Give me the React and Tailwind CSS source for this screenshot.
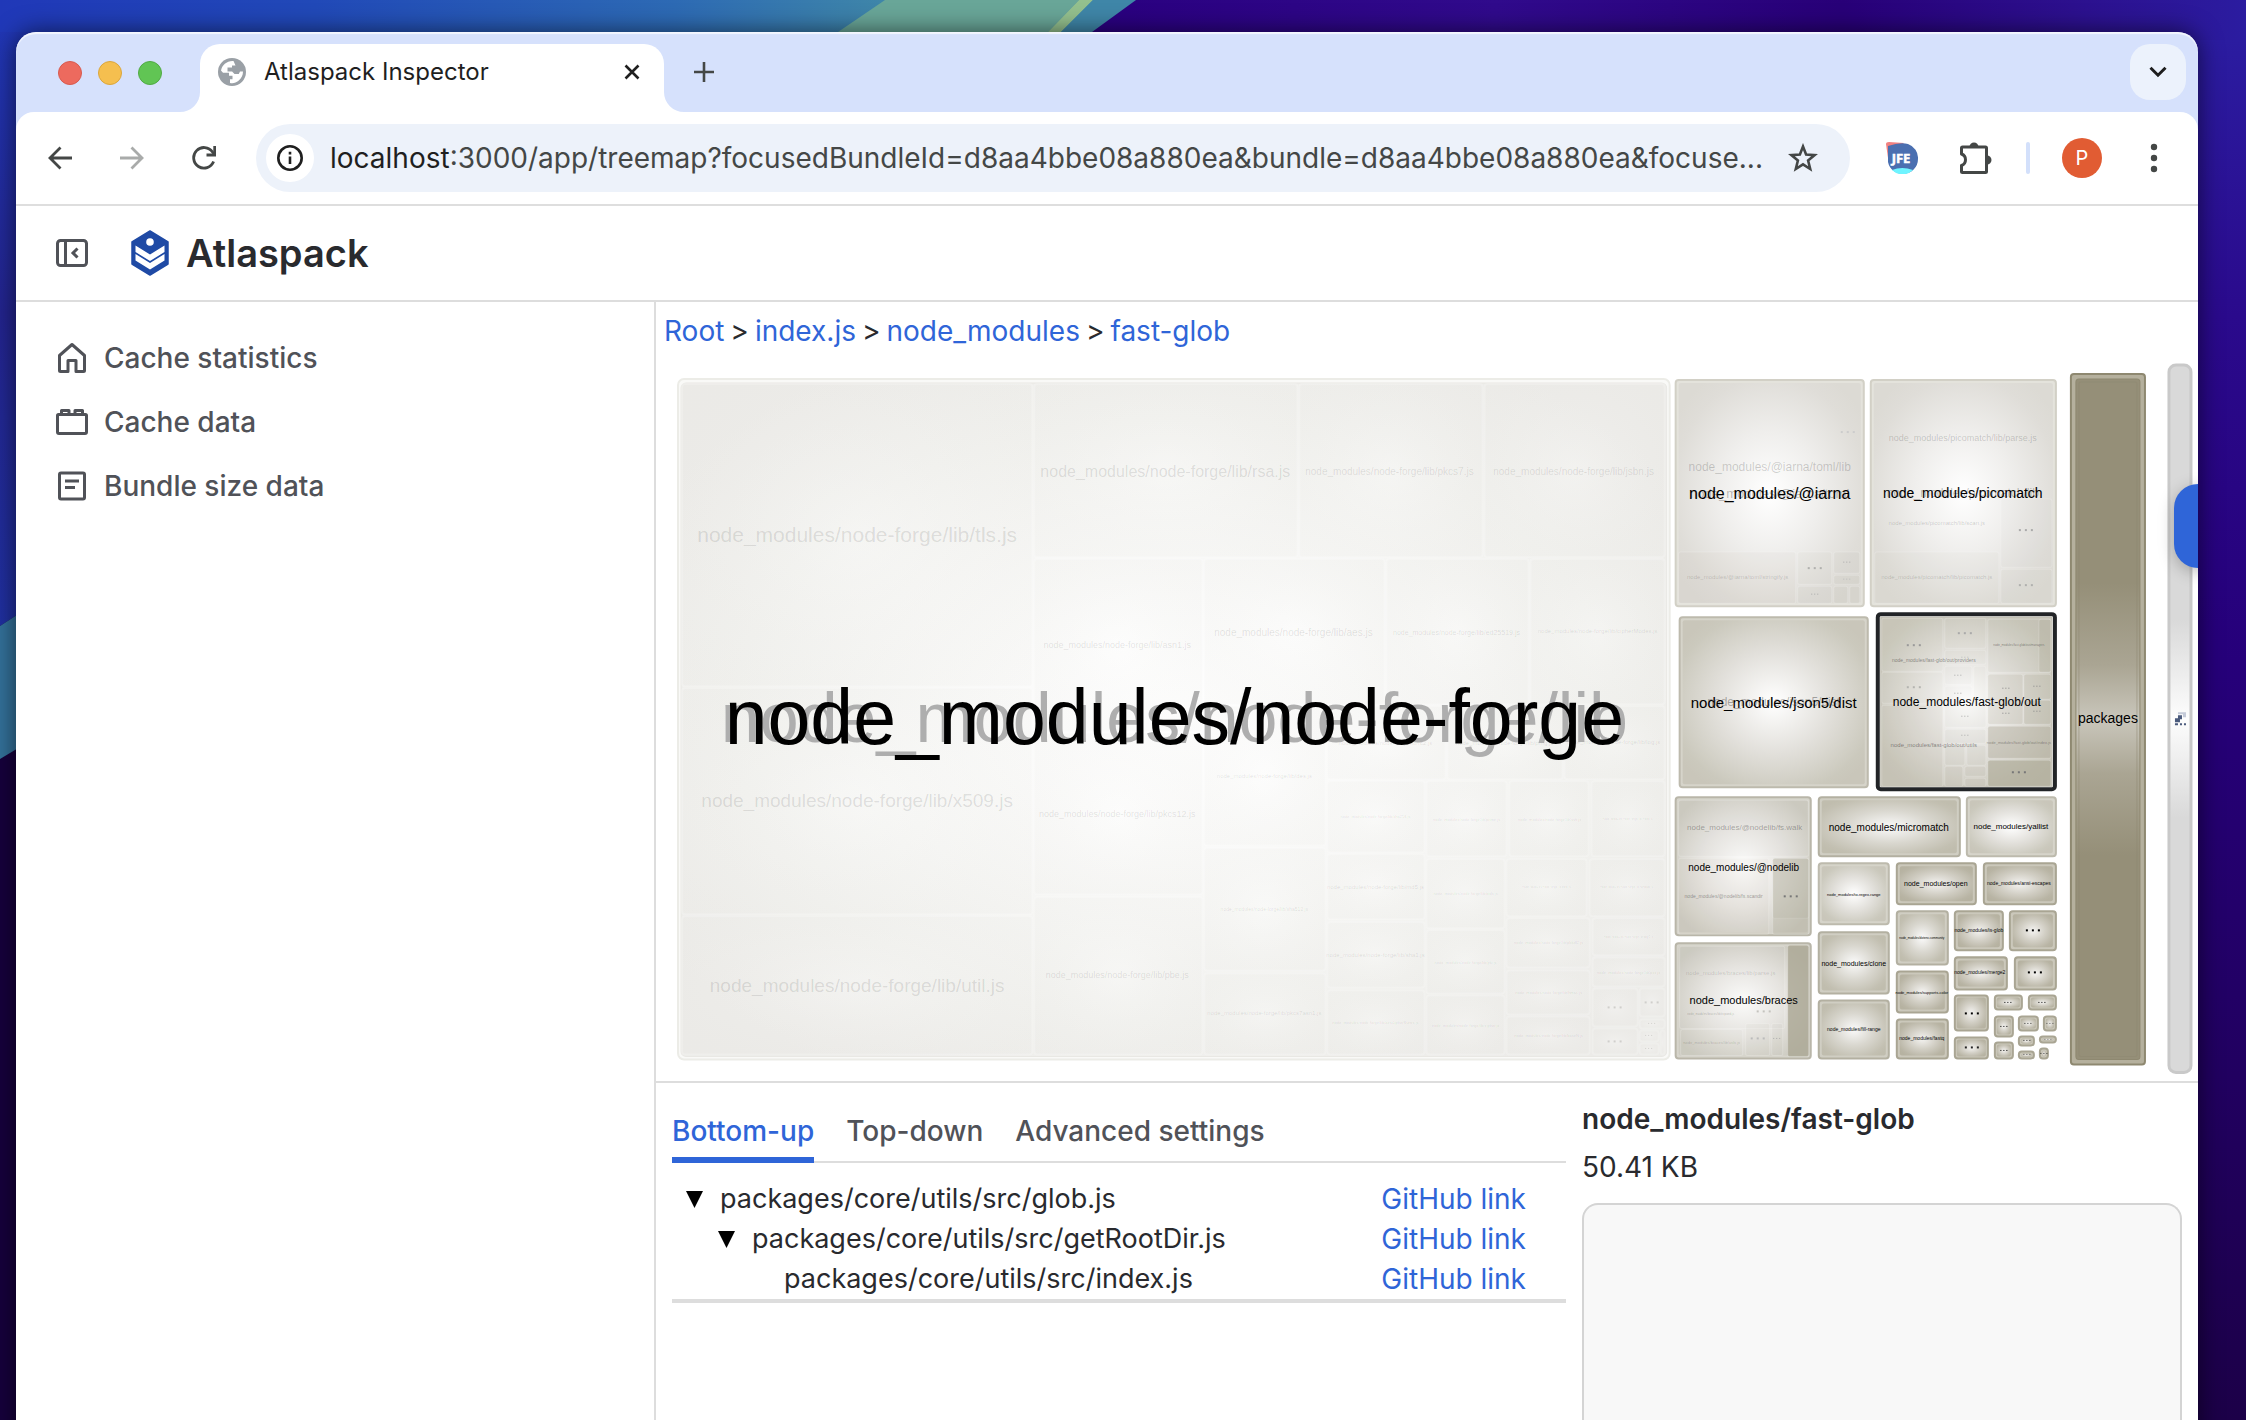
import React from 'react';

const SANS = "font-['Inter','Liberation_Sans',sans-serif]";

/* ---------- treemap data: [x, y, width, height] on the chart canvas ---------- */

const forgeCells = [
  [682, 385, 350, 302], [682, 689, 350, 226], [682, 917, 350, 138],
  [1034, 385, 263, 173], [1299, 385, 183, 173], [1484, 385, 180, 173],
  [1034, 560, 168, 172], [1034, 734, 168, 161], [1034, 898, 168, 157],
  [1204, 560, 180, 145], [1386, 560, 142, 145], [1530, 560, 134, 145],
  [1204, 707, 121, 139], [1204, 849, 121, 122], [1204, 974, 121, 81],
  [1327, 707, 118, 73], [1447, 707, 115, 73], [1564, 707, 100, 73],
  [1327, 782, 97, 71], [1327, 855, 97, 65], [1327, 923, 97, 65], [1327, 991, 97, 64],
  [1426, 782, 80, 75], [1509, 782, 79, 75], [1591, 782, 73, 75],
  [1426, 860, 78, 69], [1426, 931, 78, 63], [1426, 996, 78, 59],
  [1506, 860, 80, 57], [1589, 860, 75, 57],
  [1506, 919, 83, 49], [1506, 971, 83, 44], [1506, 1017, 83, 38],
  [1592, 919, 72, 37], [1592, 958, 72, 29],
  [1592, 989, 45, 38], [1592, 1029, 45, 26],
  [1639, 989, 25, 28], [1639, 1020, 25, 9], [1639, 1031, 19, 11], [1639, 1044, 19, 11], [1660, 1031, 4, 24],
];

const forgeLabels = [
  [857, 535, 21, 'node_modules/node-forge/lib/tls.js'],
  [857, 801, 19, 'node_modules/node-forge/lib/x509.js'],
  [857, 986, 19, 'node_modules/node-forge/lib/util.js'],
  [1165, 472, 16, 'node_modules/node-forge/lib/rsa.js'],
  [1389, 472, 10, 'node_modules/node-forge/lib/pkcs7.js'],
  [1573, 472, 10, 'node_modules/node-forge/lib/jsbn.js'],
  [1117, 646, 9, 'node_modules/node-forge/lib/asn1.js'],
  [1117, 815, 9, 'node_modules/node-forge/lib/pkcs12.js'],
  [1117, 976, 9, 'node_modules/node-forge/lib/pbe.js'],
  [1293, 633, 10, 'node_modules/node-forge/lib/aes.js'],
  [1456, 633, 7, 'node_modules/node-forge/lib/ed25519.js'],
  [1597, 632, 6, 'node_modules/node-forge/lib/cipherModes.js'],
  [1264, 777, 6, 'node_modules/node-forge/lib/des.js'],
  [1264, 910, 5, 'node_modules/node-forge/lib/sha512.js'],
  [1264, 1014, 6, 'node_modules/node-forge/lib/pkcs7asn1.js'],
  [1385, 744, 6, 'node_modules/node-forge/lib/rc2.js'],
  [1504, 744, 6, 'node_modules/node-forge/lib/prng.js'],
  [1613, 743, 6, 'node_modules/node-forge/lib/log.js'],
  [1375, 817, 4, 'node_modules/node-forge/lib/sha256.js'],
  [1375, 888, 6, 'node_modules/node-forge/lib/md5.js'],
  [1375, 956, 6, 'node_modules/node-forge/lib/sha1.js'],
  [1375, 1023, 4, 'node_modules/node-forge/lib/aesCipherSuites.js'],
  [1466, 820, 4, 'node_modules/node-forge/lib/prime.js'],
  [1549, 820, 4, 'node_modules/node-forge/lib/ssh.js'],
  [1627, 820, 3, 'node_modules/node-forge/lib/index.js'],
  [1465, 894, 4, 'node_modules/node-forge/lib/oids.js'],
  [1465, 963, 4, 'node_modules/node-forge/lib/pki.js'],
  [1465, 1026, 4, 'node_modules/node-forge/lib/cipher.js'],
  [1546, 888, 3, 'node_modules/node-forge/lib/pem.js'],
  [1626, 888, 3, 'node_modules/node-forge/lib/random.js'],
  [1548, 943, 4, 'node_modules/node-forge/lib/pbkdf2.js'],
  [1548, 993, 4, 'node_modules/node-forge/lib/hmac.js'],
  [1548, 1036, 4, 'node_modules/node-forge/lib/baseN.js'],
  [1628, 938, 3, 'node_modules/node-forge/lib/mgf1.js'],
  [1628, 973, 4, 'node_modules/node-forge/lib/pss.js'],
];

const forgeDots = [
  [1614, 1008, 2], [1614, 1042, 2], [1651, 1003, 2], [1651, 1024, 1], [1648, 1036, 1], [1648, 1049, 1],
];

/* top-level packages: [x, y, width, height, tone] */
const packageCells = [
  [1674, 380, 190, 228, 'pale'], [1869, 380, 187, 228, 'pale'],
  [1678, 617, 190, 172, 'mid'],
  [1674, 797, 137, 140, 'soft'], [1674, 943, 137, 117, 'soft'],
  [1817, 797, 143, 61, 'deep'], [1965, 797, 91, 61, 'mid'],
  [1817, 863, 72, 63, 'mid'], [1817, 932, 72, 63, 'deep'], [1817, 1000, 72, 60, 'deep'],
  [1895, 863, 81, 43, 'dark'], [1982, 863, 74, 43, 'dark'],
  [1895, 911, 53, 55, 'deep'], [1895, 971, 53, 43, 'dark'], [1895, 1019, 53, 41, 'dark'],
  [1953, 911, 50, 41, 'dark'], [2008, 911, 48, 41, 'dark'],
  [1953, 957, 54, 34, 'dark'], [2013, 957, 43, 34, 'dark'],
  [1953, 995, 35, 37, 'dark'], [1953, 1037, 35, 23, 'dark'],
  [1993, 995, 29, 16, 'dark'], [2027, 995, 29, 16, 'dark'],
  [1993, 1016, 20, 22, 'dark'], [1993, 1042, 20, 18, 'dark'],
  [2017, 1016, 21, 16, 'dark'], [2042, 1016, 14, 16, 'dark'],
  [2017, 1036, 17, 11, 'dark'], [2038, 1036, 18, 8, 'dark'],
  [2017, 1051, 17, 9, 'dark'], [2038, 1048, 10, 12, 'dark'],
];

/* nested files: [x, y, width, height, opacity of the shade] */
const nestedCells = [
  [1678, 553, 117, 51, 0.05], [1797, 553, 34, 32, 0.06], [1797, 587, 34, 17, 0.08],
  [1833, 553, 26, 21, 0.08], [1833, 576, 26, 9, 0.1], [1833, 587, 14, 17, 0.1], [1849, 587, 10, 17, 0.1],
  [1874, 553, 124, 51, 0.04], [2000, 500, 51, 68, 0.03], [2000, 570, 51, 34, 0.06],
  [1881, 619, 61, 53, 0.04], [1881, 673, 61, 31, 0.04], [1944, 619, 41, 30, 0.04], [1944, 651, 41, 14, 0.04],
  [1944, 667, 27, 18, 0.03], [1973, 667, 12, 37, 0.04], [1944, 687, 27, 17, 0.03],
  [1881, 706, 61, 81, 0.12], [1944, 706, 41, 22, 0.06], [1944, 730, 41, 14, 0.08],
  [1944, 746, 20, 20, 0.1], [1966, 746, 19, 20, 0.1], [1944, 767, 18, 20, 0.14], [1964, 767, 21, 10, 0.14], [1964, 779, 21, 8, 0.14],
  [1987, 620, 63, 53, 0.1], [2038, 620, 12, 53, 0.25],
  [1987, 675, 35, 50, 0.2], [2023, 675, 27, 25, 0.25], [2023, 701, 27, 24, 0.3],
  [1987, 727, 63, 32, 0.4], [1987, 761, 63, 26, 0.6],
  [1678, 801, 130, 56, 0.03], [1678, 859, 90, 76, 0.05], [1772, 859, 36, 60, 0.15], [1772, 859, 36, 76, 0.3],
  [1679, 947, 105, 82, 0.02], [1680, 1030, 62, 26, 0.04], [1745, 1024, 24, 32, 0.06], [1771, 1024, 11, 32, 0.06],
  [1787, 946, 21, 111, 0.8],
];

/* [x, y, size, colour, text] */
const packageLabels = [
  [1769, 494, 13, '#00000044', 'node_modules/@iarna/toml'],
  [1769, 468, 12, '#00000030', 'node_modules/@iarna/toml/lib'],
  [1737, 578, 6, '#00000030', 'node_modules/@iarna/toml/stringify.js'],
  [1769, 494, 16, '#000000', 'node_modules/@iarna'],
  [1962, 494, 12, '#00000044', 'node_modules/picomatch/lib'],
  [1962, 439, 9, '#00000030', 'node_modules/picomatch/lib/parse.js'],
  [1936, 524, 6, '#00000030', 'node_modules/picomatch/lib/scan.js'],
  [1936, 578, 6, '#00000030', 'node_modules/picomatch/lib/picomatch.js'],
  [1962, 494, 14, '#000000', 'node_modules/picomatch'],
  [1773, 703, 12, '#00000050', 'node_modules/json5/dist'],
  [1773, 703, 15, '#000000', 'node_modules/json5/dist'],
  [1933, 661, 5, '#00000070', 'node_modules/fast-glob/out/providers'],
  [1933, 746, 6, '#00000070', 'node_modules/fast-glob/out/utils'],
  [2018, 646, 3, '#00000070', 'node_modules/fast-glob/out/managers'],
  [2018, 743, 4, '#00000060', 'node_modules/fast-glob/out/index.js'],
  [1966, 703, 12, '#000000', 'node_modules/fast-glob/out'],
  [1744, 828, 8, '#00000050', 'node_modules/@nodelib/fs.walk'],
  [1723, 897, 5, '#00000060', 'node_modules/@nodelib/fs.scandir'],
  [1743, 868, 10, '#000000', 'node_modules/@nodelib'],
  [1730, 974, 6, '#00000028', 'node_modules/braces/lib/parse.js'],
  [1710, 1015, 3, '#00000040', 'node_modules/braces/lib/expand.js'],
  [1711, 1043, 4, '#00000034', 'node_modules/braces/lib/utils.js'],
  [1743, 1001, 11, '#000000', 'node_modules/braces'],
  [1888, 828, 10, '#000000', 'node_modules/micromatch'],
  [2010, 827, 8, '#000000', 'node_modules/yallist'],
  [1853, 895, 4, '#000000', 'node_modules/to-regex-range'],
  [1853, 964, 7, '#000000', 'node_modules/clone'],
  [1853, 1030, 5, '#000000', 'node_modules/fill-range'],
  [1935, 884, 7, '#000000', 'node_modules/open'],
  [2018, 884, 5, '#000000', 'node_modules/ansi-escapes'],
  [1921, 939, 3, '#000000', 'node_modules/dotenv-community'],
  [1921, 993, 4, '#000000', 'node_modules/supports-color'],
  [1921, 1039, 5, '#000000', 'node_modules/fastq'],
  [1978, 931, 5, '#000000', 'node_modules/is-glob'],
  [1979, 973, 5, '#000000', 'node_modules/merge2'],
];

/* [x, y, size, colour] */
const packageDots = [
  [2032, 931, 2, '#000'], [2034, 973, 2, '#000'], [1971, 1014, 2, '#000'], [1971, 1048, 2, '#222'],
  [2007, 1003, 1, '#000'], [2041, 1003, 1, '#000'], [2003, 1027, 1, '#000'], [2003, 1051, 1, '#000'],
  [2027, 1024, 1, '#333'], [2049, 1024, 1, '#555'], [2026, 1041, 1, '#333'], [2047, 1040, 1, '#777'],
  [2026, 1055, 1, '#555'], [2043, 1054, 1, '#333'],
  [1790, 897, 2, '#777'], [1763, 1012, 2, '#c4c3be'], [1757, 1039, 2, '#bbb'], [1776, 1039, 1, '#aaa'],
  [1847, 433, 2, '#ccc'], [1814, 569, 2, '#b0b0ae'], [1814, 595, 1, '#aaa'], [1846, 563, 1, '#aaa'], [1846, 580, 1, '#bbb'],
  [2025, 531, 2, '#aaa'], [2025, 586, 2, '#b0b0ae'],
  [1913, 646, 2, '#999'], [1913, 688, 2, '#b4b4b0'], [1964, 634, 2, '#aaa'], [1964, 658, 1, '#bbb'],
  [1957, 676, 1, '#aaa'], [1957, 694, 1, '#aaa'], [1964, 717, 1, '#aaa'], [1964, 736, 1, '#aaa'],
  [2005, 689, 1, '#888'], [2036, 687, 1, '#888'], [2005, 714, 1, '#888'], [2036, 712, 1, '#888'], [2018, 773, 2, '#777'],
];

const tones = {
  pale: { fill: 'url(#tone-pale)', border: '#d2d0c6', rim: '#e4e3dc' },
  soft: { fill: 'url(#tone-soft)', border: '#b9b6a9', rim: '#d6d4cb' },
  mid: { fill: 'url(#tone-mid)', border: '#bdbaad', rim: '#d6d4ca' },
  deep: { fill: 'url(#tone-deep)', border: '#b3b0a1', rim: '#d0cec3' },
  dark: { fill: 'url(#tone-dark)', border: '#a9a593', rim: '#cbc8bb' },
};

function Label({ x, y, size, fill, children }) {
  return (
    <text x={x} y={y} fontSize={size} fill={fill} textAnchor="middle" dominantBaseline="central">
      {children}
    </text>
  );
}

function Dots({ x, y, size, fill }) {
  const gap = size === 1 ? 3 : size * 3;
  return (
    <g fill={fill}>
      {[-gap, 0, gap].map((dx) => (
        <rect key={dx} x={x + dx - size / 2} y={y - size / 2} width={size + 0} height={size} />
      ))}
    </g>
  );
}

function Gradient({ id, stops }) {
  return (
    <radialGradient id={id} cx="0.5" cy="0.5" r="0.62">
      {stops.map(([offset, color, opacity = 1]) => (
        <stop key={offset} offset={offset} stopColor={color} stopOpacity={opacity} />
      ))}
    </radialGradient>
  );
}

function Treemap() {
  return (
    <svg
      viewBox="656 361 1541 721"
      className="block w-full font-['Liberation_Sans',Arial,sans-serif]"
      role="img"
      aria-label="Bundle size treemap"
    >
      <defs>
        <Gradient id="forge" stops={[[0, '#ffffff'], [0.3, '#fafaf9'], [0.72, '#f1f1ee'], [1, '#ecebe8']]} />
        <Gradient id="glow" stops={[[0, '#ffffff', 0.25], [1, '#e4e3de', 0.12]]} />
        <Gradient id="tone-pale" stops={[[0, '#ffffff'], [0.45, '#efeeec'], [0.85, '#dfddd8'], [1, '#dcdad4']]} />
        <Gradient id="tone-soft" stops={[[0, '#fdfdfc'], [0.5, '#e8e6e2'], [1, '#cdcbc1']]} />
        <Gradient id="tone-mid" stops={[[0, '#ffffff'], [0.5, '#e2e0db'], [0.9, '#cbc9bd'], [1, '#c9c6ba']]} />
        <Gradient id="tone-deep" stops={[[0, '#fafafa'], [0.5, '#d9d7cf'], [0.9, '#c3c0b2'], [1, '#c0bdae']]} />
        <Gradient id="tone-dark" stops={[[0, '#f4f3f1'], [0.5, '#d2cfc5'], [0.9, '#b9b5a5'], [1, '#b6b2a1']]} />
        <linearGradient id="packages" x1="0" y1="0" x2="0" y2="1">
          <stop offset="0" stopColor="#958f78" />
          <stop offset="0.3" stopColor="#958f78" />
          <stop offset="0.42" stopColor="#aaa593" />
          <stop offset="0.5" stopColor="#c9c6bb" />
          <stop offset="0.58" stopColor="#aaa593" />
          <stop offset="0.7" stopColor="#958f78" />
          <stop offset="1" stopColor="#958f78" />
        </linearGradient>
        <linearGradient id="brand" x1="0" y1="0" x2="0" y2="1">
          <stop offset="0.36" stopColor="#d9d9d9" />
          <stop offset="0.5" stopColor="#fdfdfd" />
          <stop offset="0.64" stopColor="#d9d9d9" />
        </linearGradient>
      </defs>

      <rect x="678" y="380" width="991" height="680" rx="6" fill="#f9f9f7" stroke="#ecece7" strokeWidth="2" />
      <rect x="681" y="384" width="985" height="673" rx="5" fill="url(#forge)" stroke="#e9e8e4" />
      {forgeCells.map(([x, y, w, h]) => (
        <rect key={`${x}-${y}`} x={x} y={y} width={w} height={h} rx="3" fill="url(#glow)" stroke="#ffffff" strokeOpacity="0.2" strokeWidth="2" />
      ))}
      {forgeLabels.map(([x, y, size, text]) => (
        <Label key={text} x={x} y={y} size={size} fill="#0000001c">{text}</Label>
      ))}
      {forgeDots.map(([x, y, size]) => (
        <Dots key={`${x}-${y}`} x={x} y={y} size={size} fill="#d0cfcc" />
      ))}
      <Label x={1174} y={719} size={70} fill="#aeaeae">node_modules/node-forge/lib</Label>
      <Label x={1174} y={718} size={77} fill="#000000">node_modules/node-forge</Label>

      {packageCells.map(([x, y, w, h, tone]) => {
        const t = tones[tone];
        const inset = w < 40 ? 3 : 4;
        return (
          <g key={`${x}-${y}`}>
            <rect x={x + 1} y={y + 1} width={w - 2} height={h - 2} rx="3" fill={t.rim} stroke={t.border} strokeWidth="2" />
            <rect x={x + inset} y={y + inset} width={w - inset * 2} height={h - inset * 2} rx="2" fill={t.fill} />
          </g>
        );
      })}
      <rect x="1877" y="615" width="177" height="175" rx="3" fill="#ffffff" stroke="#222427" strokeWidth="4" />
      <rect x="1880" y="618" width="171" height="169" fill="url(#tone-mid)" stroke="#bdbaad" />
      {nestedCells.map(([x, y, w, h, shade]) => (
        <rect key={`${x}-${y}-${h}`} x={x} y={y} width={w} height={h} rx="2" fill="#aaa693" fillOpacity={shade} stroke="#ffffff" strokeOpacity="0.2" />
      ))}
      {packageLabels.map(([x, y, size, fill, text]) => (
        <Label key={`${text}-${size}`} x={x} y={y} size={size} fill={fill}>{text}</Label>
      ))}
      {packageDots.map(([x, y, size, fill]) => (
        <Dots key={`${x}-${y}`} x={x} y={y} size={size} fill={fill} />
      ))}

      <rect x="2070" y="375" width="74" height="690" rx="3" fill="#b5b09d" stroke="#8e8870" strokeWidth="2" />
      <rect x="2075" y="380" width="64" height="680" rx="3" fill="url(#packages)" stroke="#8e8870" />
      <rect x="2078" y="383" width="58" height="674" rx="2" fill="none" stroke="#8e8870" strokeOpacity="0.5" />
      <Label x={2107} y={719} size={14} fill="#000000">packages</Label>

      <rect x="2168" y="366" width="22" height="707" rx="7" fill="url(#brand)" stroke="#c9c9c9" strokeWidth="3" />
      <g fill="#4a5a7c">
        <path d="M2174 719h3v-3h4v4h-2v3h-5z" />
        <path d="M2177 713h8v5h-3v-3h-5z" fill="#c4cad8" />
        <path d="M2174 724h3v2h-3zM2179 724h2v2h-2zM2183 724h2v2h-2z" />
      </g>
    </svg>
  );
}

/* ---------- desktop ---------- */

function Wallpaper() {
  return (
    <svg className="absolute inset-0 h-full w-full" viewBox="0 0 2246 1420" preserveAspectRatio="none" aria-hidden="true">
      <defs>
        <linearGradient id="sky" gradientUnits="userSpaceOnUse" x1="0" y1="0" x2="900" y2="0">
          <stop offset="0" stopColor="#2038b8" />
          <stop offset="0.35" stopColor="#2149b8" />
          <stop offset="0.75" stopColor="#2d6ab4" />
          <stop offset="1" stopColor="#4088a8" />
        </linearGradient>
        <linearGradient id="left" x1="0" y1="0" x2="0" y2="1">
          <stop offset="0" stopColor="#2038b8" />
          <stop offset="0.5" stopColor="#23248e" />
          <stop offset="1" stopColor="#2030a0" />
        </linearGradient>
        <linearGradient id="violet" x1="0" y1="0" x2="1" y2="0">
          <stop offset="0" stopColor="#2a0080" />
          <stop offset="0.35" stopColor="#300a8c" />
          <stop offset="0.65" stopColor="#280078" />
          <stop offset="0.85" stopColor="#2c108e" />
          <stop offset="1" stopColor="#2b1ca0" />
        </linearGradient>
        <linearGradient id="right" x1="0" y1="0" x2="0" y2="1">
          <stop offset="0" stopColor="#2b1ca0" />
          <stop offset="0.2" stopColor="#2a0a8c" />
          <stop offset="0.45" stopColor="#26007a" />
          <stop offset="0.75" stopColor="#210060" />
          <stop offset="1" stopColor="#1c0048" />
        </linearGradient>
      </defs>
      <rect width="2246" height="1420" fill="#16003c" />
      <path d="M0 0H40V600L0 626Z" fill="url(#left)" />
      <path d="M0 0H1140V32H0Z" fill="url(#sky)" />
      <path d="M0 626L40 600V735L0 759Z" fill="#33719a" />
      <path d="M885 0H1079L1048 32H838Z" fill="#69a698" />
      <path d="M1079 0H1093L1061 32H1048Z" fill="#94c08e" />
      <path d="M1093 0H1136L1092 32H1061Z" fill="#3f86a8" />
      <path d="M1136 0H2246V200H1092V32Z" fill="url(#violet)" />
      <path d="M2190 40H2246V1420H2190Z" fill="url(#right)" />
    </svg>
  );
}

/* ---------- browser chrome ---------- */

function TabStrip() {
  return (
    <div className="flex h-20 items-end pl-[42px] pr-3">
      <div className="flex h-full items-center gap-4 pr-[18px] pt-[2px]">
        <button aria-label="Close window" className="size-6 rounded-full border border-[#d85a4f] bg-[#ed6a5e]" />
        <button aria-label="Minimise window" className="size-6 rounded-full border border-[#dba63c] bg-[#f5bf4f]" />
        <button aria-label="Zoom window" className="size-6 rounded-full border border-[#51aa44] bg-[#61c554]" />
      </div>
      <svg className="size-5 text-white" viewBox="0 0 20 20" aria-hidden="true"><path d="M20 0v20H0A20 20 0 0 0 20 0Z" fill="currentColor" /></svg>
      <div className="flex h-[68px] w-[464px] items-center rounded-t-[20px] bg-white pb-3 pl-[18px] pr-5">
        <svg className="size-7 shrink-0" viewBox="0 0 28 28" aria-hidden="true">
          <circle cx="14" cy="14" r="14" fill="#9aa0a6" />
          <path d="M15.500 3C9 2.500 4 7 3 12.500l2 2.200h6v3h3.500v3.500H12V25c3.500.8 6-.3 8.500-2.200 3-2.600 4.500-5.500 4.500-9.300h-3l-1.200 2.400h-4.300l-2.400-2.500H9.500v-3.800h4.500V7.500h3.500Z" fill="#fff" />
        </svg>
        <span className="ml-[18px] grow truncate text-2xl text-[#1f1f1f]">Atlaspack Inspector</span>
        <button aria-label="Close tab" className="p-1 text-[#1f1f1f]">
          <svg className="size-4" viewBox="0 0 16 16"><path d="M1.500 1.500l13 13M14.500 1.500l-13 13" stroke="currentColor" strokeWidth="2.600" /></svg>
        </button>
      </div>
      <svg className="size-5 text-white" viewBox="0 0 20 20" aria-hidden="true"><path d="M0 0v20h20A20 20 0 0 1 0 0Z" fill="currentColor" /></svg>
      <button aria-label="New tab" className="mb-[30px] ml-[10px] text-[#444746]">
        <svg className="size-5" viewBox="0 0 20 20"><path d="M10 0v20M0 10h20" stroke="currentColor" strokeWidth="2.600" /></svg>
      </button>
      <button aria-label="Search tabs" className="mb-3 ml-auto flex size-14 items-center justify-center rounded-[20px] bg-[#ecf2fc] text-[#1f1f1f]">
        <svg className="h-3 w-[18px]" viewBox="0 0 18 12"><path d="M1.500 1.800L9 9.200l7.500-7.400" fill="none" stroke="currentColor" strokeWidth="3" /></svg>
      </button>
    </div>
  );
}

function Toolbar() {
  return (
    <div className="flex h-[94px] items-center rounded-t-[18px] border-b-2 border-[#dedede] bg-white pl-8 pr-10 text-[#444746]">
      <button aria-label="Back">
        <svg className="size-6" viewBox="0 0 24 24" fill="none" stroke="currentColor" strokeWidth="2.800"><path d="M24 12H2M12.500 1.500L2 12l10.500 10.500" /></svg>
      </button>
      <button aria-label="Forward" className="ml-12 text-[#a9abaa]" disabled>
        <svg className="size-6" viewBox="0 0 24 24" fill="none" stroke="currentColor" strokeWidth="2.800"><path d="M0 12h22M11.500 1.500L22 12 11.500 22.500" /></svg>
      </button>
      <button aria-label="Reload" className="ml-12">
        <svg className="size-6" viewBox="0 0 24 24" fill="none" stroke="currentColor" strokeWidth="2.800">
          <path d="M21.600 15.500A10.300 10.300 0 1 1 20.500 6L22.500 8.500" />
          <path d="M14.500 9h8.200V0" />
        </svg>
      </button>
      <div className="ml-10 flex h-[68px] min-w-0 grow items-center rounded-full bg-[#edf2fa] pl-[10px] pr-8">
        <button aria-label="Site information" className="flex size-12 shrink-0 items-center justify-center rounded-full bg-white text-[#1f1f1f]">
          <svg className="size-[26px]" viewBox="0 0 26 26" fill="none" stroke="currentColor" strokeWidth="2.600">
            <circle cx="13" cy="13" r="11.700" /><path d="M13 11.500V19M13 6.800v2.700" />
          </svg>
        </button>
        <div className="ml-4 flex min-w-0 grow items-center text-[28px] leading-9">
          <label htmlFor="address" className="text-[#1f1f1f]">localhost</label>
          <input
            id="address"
            className="min-w-0 grow truncate bg-transparent outline-none"
            defaultValue=":3000/app/treemap?focusedBundleId=d8aa4bbe08a880ea&bundle=d8aa4bbe08a880ea&focuse..."
          />
        </div>
        <button aria-label="Bookmark" className="ml-4">
          <svg className="size-[30px]" viewBox="0 0 30 30" fill="none" stroke="currentColor" strokeWidth="2.600">
            <path d="M15 3.500l3.100 8 8.600.6-6.600 5.500 2.100 8.400L15 21.400 7.800 26l2.100-8.400-6.600-5.500 8.600-.6Z" />
          </svg>
        </button>
      </div>
      <button aria-label="JFE extension" className="ml-9 shrink-0">
        <svg className="size-8" viewBox="0 0 32 32">
          <path d="M0 2Q0 0 3 0l15 1L2 16Z" fill="#f08080" />
          <path d="M2 4Q14 0 22 2a15 15 0 0 1 10 15A15 15 0 0 1 17 32 15 15 0 0 1 2 20Z" fill="#4a6fb0" />
          <path d="M6 28q10-4 21 0a15 15 0 0 1-21 0Z" fill="#6ff4ff" />
          <text x="15" y="21" textAnchor="middle" fontSize="13" fontWeight="700" fill="#fff" stroke="#fff" strokeWidth="0.500" fontFamily="Open Sans, sans-serif">JFE</text>
        </svg>
      </button>
      <button aria-label="Extensions" className="ml-[42px] shrink-0">
        <svg className="size-8" viewBox="0 0 32 32" fill="none" stroke="currentColor" strokeWidth="3" strokeLinejoin="round">
          <path d="M1.500 12V6Q1.500 5 2.500 5H25.500Q26.500 5 26.500 6V29.500Q26.500 30.500 25.500 30.500H2.500Q1.500 30.500 1.500 29.500V23.500Q5.500 22 5.500 17.700T1.500 12Z" />
          <path d="M9.500 5a4.500 4.500 0 0 1 9 0ZM27 13.500a4.500 4.500 0 0 1 0 9Z" fill="currentColor" stroke="none" />
        </svg>
      </button>
      <div className="ml-[34px] h-8 w-1 shrink-0 rounded-full bg-[#d3e0fb]" />
      <button aria-label="Profile" className="ml-8 flex size-10 shrink-0 items-center justify-center rounded-full bg-[#e15c33] text-xl text-white">P</button>
      <button aria-label="Menu" className="ml-12 shrink-0">
        <svg className="h-8 w-2" viewBox="0 0 8 32" fill="currentColor"><circle cx="4" cy="5" r="3.200" /><circle cx="4" cy="16" r="3.200" /><circle cx="4" cy="27" r="3.200" /></svg>
      </button>
    </div>
  );
}

/* ---------- application ---------- */

function AppHeader() {
  return (
    <header className="flex h-24 items-center border-b-2 border-[#dddddd] pl-10">
      <button aria-label="Collapse sidebar" className="text-[#505258]">
        <svg className="h-7 w-8" viewBox="0 0 32 28" fill="none" stroke="currentColor" strokeWidth="3">
          <rect x="1.500" y="1.500" width="29" height="25" rx="3" /><path d="M9.500 2v24M21.500 9.500L17 14l4.500 4.500" />
        </svg>
      </button>
      <svg className="ml-[42px] h-[46px] w-10" viewBox="0 0 40 46" aria-hidden="true">
        <path d="M20 1L38 12V34L20 45 2 34V12Z" fill="#1f4aa5" stroke="#1f4aa5" strokeWidth="1.500" strokeLinejoin="round" />
        <circle cx="20" cy="12" r="3.800" fill="#fff" />
        <path d="M5.500 15.500L20 24.500 34.500 15.500V22L20 31 5.500 22Z" fill="#fff" />
        <path d="M5.500 24L20 33 34.500 24V30.500L20 39.500 5.500 30.500Z" fill="#fff" />
      </svg>
      <h1 className="ml-4 text-[38px] font-semibold leading-[48px] text-[#292a2e]">Atlaspack</h1>
    </header>
  );
}

const navItems = [
  {
    label: 'Cache statistics',
    icon: <path d="M3.500 13.500L16 2.500l12.500 11V28.500q0 1-1 1H20V18.500h-8v11H4.500q-1 0-1-1Z" />,
  },
  {
    label: 'Cache data',
    icon: <path d="M1.500 9.500q0-1 1-1h27q1 0 1 1V26q0 1.500-1.500 1.500H3Q1.500 27.500 1.500 26ZM5.500 8V4.500h7.500V8M19 8V4.500h7.500V8" />,
  },
  {
    label: 'Bundle size data',
    icon: <path d="M3.500 4.500q0-1.500 1.500-1.500H27q1.500 0 1.500 1.500v23q0 1.500-1.500 1.500H5q-1.500 0-1.500-1.500ZM9 11h14M9 17.500h10" />,
  },
];

function Sidebar() {
  return (
    <nav className="w-[640px] shrink-0 border-r-2 border-[#dddddd] pl-10 pt-6">
      {navItems.map(({ label, icon }) => (
        <a key={label} href="#" className="flex h-16 items-center gap-4 text-[28px] font-medium text-[#505258]">
          <svg className="size-8" viewBox="0 0 32 32" fill="none" stroke="currentColor" strokeWidth="3" strokeLinejoin="round">{icon}</svg>
          {label}
        </a>
      ))}
    </nav>
  );
}

const crumbs = ['Root', 'index.js', 'node_modules', 'fast-glob'];

function Breadcrumbs() {
  return (
    <nav aria-label="Breadcrumb" className="flex h-[58px] items-center gap-[6px] pl-2 text-[28px] text-[#292a2e]">
      {crumbs.map((crumb, i) => (
        <React.Fragment key={crumb}>
          {i > 0 && <span>&gt;</span>}
          <a href="#" className="text-[#2f65d8]">{crumb}</a>
        </React.Fragment>
      ))}
    </nav>
  );
}

const rows = [
  { path: 'packages/core/utils/src/glob.js', indent: 'pl-3', open: true },
  { path: 'packages/core/utils/src/getRootDir.js', indent: 'pl-11', open: true },
  { path: 'packages/core/utils/src/index.js', indent: 'pl-[76px]', open: false },
];

function ImportPanel() {
  return (
    <section className="min-w-0 grow pl-4 pt-6">
      <div role="tablist" className="flex h-14 items-start gap-8 border-b-2 border-[#dddddd] text-[28px] font-medium leading-[48px] text-[#505258]">
        <button role="tab" aria-selected="true" className="border-b-[6px] border-[#2f65d8] pb-[2px] text-[#2f65d8]">Bottom-up</button>
        <button role="tab" aria-selected="false">Top-down</button>
        <button role="tab" aria-selected="false">Advanced settings</button>
      </div>
      <ul className="border-b-4 border-[#dddddd] pt-4 text-[27px] leading-10 text-[#292a2e]">
        {rows.map(({ path, indent, open }) => (
          <li key={path} className={`flex items-center pr-10 ${indent}`}>
            <span className="w-9 shrink-0">
              {open && (
                <button aria-label="Collapse" className="block text-black">
                  <svg className="ml-[2px] size-[17px]" viewBox="0 0 17 17"><path d="M0 0h17L8.500 17Z" fill="currentColor" /></svg>
                </button>
              )}
            </span>
            <span className="grow truncate">{path}</span>
            <a href="#" className="text-[28px] text-[#2f65d8]">GitHub link</a>
          </li>
        ))}
      </ul>
    </section>
  );
}

function DetailsPanel() {
  return (
    <section className="flex w-[632px] shrink-0 flex-col px-4 pt-4 text-[28px] text-[#292a2e]">
      <h2 className="font-semibold leading-10">node_modules/fast-glob</h2>
      <p className="mt-2 leading-10">50.41 KB</p>
      <div className="mt-4 grow rounded-t-2xl border-2 border-b-0 border-[#d4d4d4] bg-[#f8f8f8]" />
    </section>
  );
}

export default function App() {
  return (
    <div className={`relative h-screen overflow-hidden ${SANS}`}>
      <Wallpaper />
      <div className="relative ml-4 mr-12 mt-8 flex h-full flex-col overflow-hidden rounded-t-[20px] bg-[#d6e1fc] shadow-[0_0_24px_rgba(0,0,0,0.6),inset_0_2px_1px_rgba(255,255,255,0.7)]">
        <TabStrip />
        <Toolbar />
        <div className="flex min-h-0 grow flex-col bg-white">
          <AppHeader />
          <div className="flex min-h-0 grow">
            <Sidebar />
            <main className="relative flex min-w-0 grow flex-col">
              <Breadcrumbs />
              <Treemap />
              <button aria-label="Open panel" className="absolute -right-6 top-[182px] h-[84px] w-12 rounded-[24px] bg-[#2f65d8] shadow-[0_4px_16px_rgba(0,0,0,0.25)]" />
              <div className="flex min-h-0 grow border-t-2 border-[#dddddd]">
                <ImportPanel />
                <DetailsPanel />
              </div>
            </main>
          </div>
        </div>
      </div>
    </div>
  );
}
